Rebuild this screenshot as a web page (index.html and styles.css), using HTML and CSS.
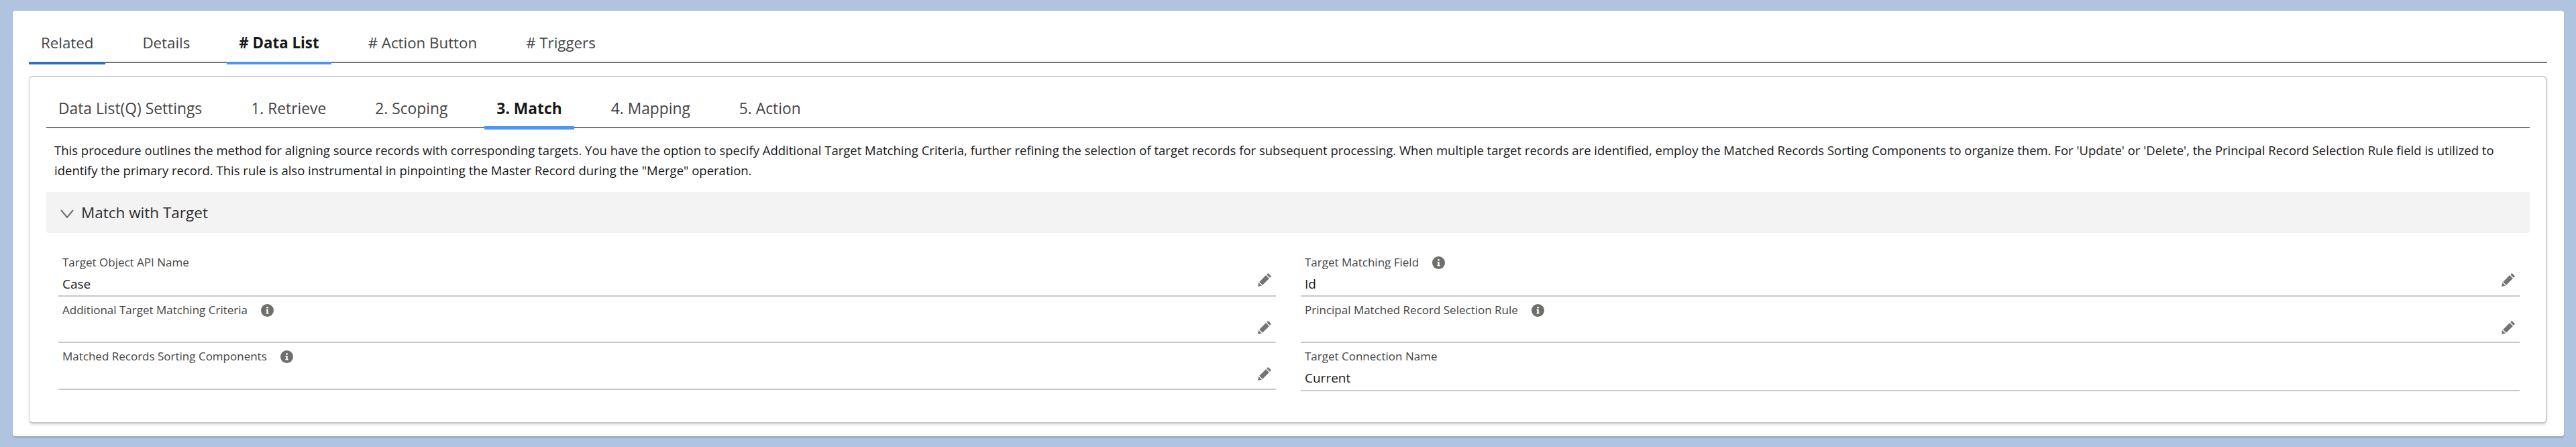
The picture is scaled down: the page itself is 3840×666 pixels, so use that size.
FILE: index.html
```html
<!DOCTYPE html>
<html lang="en">
<head>
<meta charset="utf-8">
<title>Data List - Match</title>
<link rel="stylesheet" href="styles.css">
</head>
<body>
<svg class="defs" width="0" height="0" aria-hidden="true">
  <symbol id="pencil" viewBox="0 0 24 24">
    <g transform="rotate(45 12 12)" fill="currentColor">
      <rect x="8.6" y="-0.4" width="6.8" height="3.2" rx="1"/>
      <rect x="8.6" y="4.2" width="6.8" height="14"/>
      <path d="M8.6 19.6h6.8L12 24.6z"/>
    </g>
  </symbol>
  <symbol id="info" viewBox="0 0 20 20">
    <circle cx="10" cy="10" r="10" fill="currentColor"/>
    <circle cx="10" cy="5.6" r="1.5" fill="#fff"/>
    <path d="M7.9 8.4h3.4v5.4h1v1.5H7.8v-1.5h1V9.9h-.9z" fill="#fff"/>
  </symbol>
</svg>
<main class="page-card">
  <nav class="tabs tabs-main">
    <a class="tab tab-plain">Related</a>
    <a class="tab">Details</a>
    <a class="tab tab-active"># Data List</a>
    <a class="tab"># Action Button</a>
    <a class="tab"># Triggers</a>
  </nav>
  <section class="panel">
    <nav class="tabs tabs-sub">
      <a class="tab">Data List(Q) Settings</a>
      <a class="tab">1. Retrieve</a>
      <a class="tab">2. Scoping</a>
      <a class="tab tab-active">3. Match</a>
      <a class="tab">4. Mapping</a>
      <a class="tab">5. Action</a>
    </nav>
    <p class="intro">This procedure outlines the method for aligning source records with corresponding targets. You have the option to specify Additional Target Matching Criteria, further refining the selection of target records for subsequent processing. When multiple target records are identified, employ the Matched Records Sorting Components to organize them. For 'Update' or 'Delete', the Principal Record Selection Rule field is utilized to identify the primary record. This rule is also instrumental in pinpointing the Master Record during the "Merge" operation.</p>
    <h2 class="section-head">
      <svg class="chevron" viewBox="0 0 20 13"><polyline points="1,1 10,12 19,1"/></svg>
      <span>Match with Target</span>
    </h2>
    <div class="fields">
      <div class="field field-row1">
        <div class="label">Target Object API Name</div>
        <div class="value">Case</div>
        <svg class="pencil"><use href="#pencil"/></svg>
      </div>
      <div class="field field-row1">
        <div class="label">Target Matching Field<svg class="info"><use href="#info"/></svg></div>
        <div class="value">Id</div>
        <svg class="pencil"><use href="#pencil"/></svg>
      </div>
      <div class="field field-row2">
        <div class="label">Additional Target Matching Criteria<svg class="info"><use href="#info"/></svg></div>
        <svg class="pencil"><use href="#pencil"/></svg>
      </div>
      <div class="field field-row2">
        <div class="label">Principal Matched Record Selection Rule<svg class="info"><use href="#info"/></svg></div>
        <svg class="pencil"><use href="#pencil"/></svg>
      </div>
      <div class="field field-row3">
        <div class="label">Matched Records Sorting Components<svg class="info"><use href="#info"/></svg></div>
        <svg class="pencil"><use href="#pencil"/></svg>
      </div>
      <div class="field field-row3b">
        <div class="label">Target Connection Name</div>
        <div class="value">Current</div>
      </div>
    </div>
  </section>
</main>
</body>
</html>
```
FILE: styles.css
```css
* { box-sizing: border-box; }
html, body { margin: 0; height: 666px; overflow: hidden; }
body {
  background: #b0c4df;
  padding: 16px 18px 16px 19px;
  font-family: "Open Sans", "Noto Sans", sans-serif;
  color: #181818;
}
.defs { position: absolute; }
.page-card {
  height: 634px;
  background: #fff;
  border-radius: 4px;
  box-shadow: 0 2px 2px rgba(0, 0, 0, .18);
  padding: 0 25px 0 24px;
}
.tabs { display: flex; border-bottom: 2px solid #747474; }
.tab {
  position: relative;
  display: block;
  padding: 0 18px;
  color: #444;
  white-space: nowrap;
}
.tabs-main { height: 78px; padding-top: 33px; gap: 37px; }
.tabs-main .tab { font-size: 22.3px; line-height: 30px; height: 45px; }
.tabs-sub { height: 76px; margin: 0 24px 0 25px; padding-top: 32px; gap: 37px; }
.tabs-sub .tab { font-size: 22.8px; line-height: 30px; height: 43px; padding: 0 18px; }
.tab-active { color: #181818; font-weight: 700; }
.tab-active::after {
  content: "";
  position: absolute;
  left: 0; right: 0; bottom: -2px;
  height: 4px;
  background: #4a97f3;
}
.tabs-sub .tab-active::after { height: 5px; bottom: -3px; }
.tab-plain::after {
  content: "";
  position: absolute;
  left: 0; right: 0; bottom: -2px;
  height: 3px;
  background: #1b72c9;
}
.panel {
  margin-top: 19px;
  height: 518px;
  border: 1px solid #d0d0d0;
  border-width: 2px 2px 2px 1px;
  border-bottom-color: #c8c8c8;
  border-radius: 6px;
  box-shadow: 0 2px 3px rgba(0, 0, 0, .12);
}
.intro {
  margin: 18px 24px 0 37px;
  font-size: 18.5px;
  line-height: 30px;
  color: #181818;
}
.section-head {
  display: flex;
  align-items: center;
  margin: 17px 24px 0 25px;
  height: 61px;
  padding-left: 21px;
  background: #f3f3f3;
  border-radius: 2px;
  font-size: 22.5px;
  font-weight: 400;
  color: #2e2e2e;
}
.chevron { width: 20px; height: 13px; margin: 3px 11px 0 0; }
.chevron polyline { fill: none; stroke: #706e6b; stroke-width: 2; }
.fields {
  display: grid;
  grid-template-columns: 1815px 1817px;
  column-gap: 37px;
  margin: 24px 0 0 43px;
  align-items: start;
}
.field {
  position: relative;
  border-bottom: 2px solid #c9c9c9;
  padding: 8px 6px 0;
}
.field-row1 { height: 71px; }
.field-row2 { height: 69px; }
.field-row3 { height: 70px; }
.field-row3b { height: 72px; }
.label {
  display: flex;
  align-items: center;
  font-size: 17px;
  line-height: 24px;
  color: #444;
}
.value { margin-top: 6px; font-size: 19px; line-height: 28px; color: #181818; }
.info { width: 19px; height: 19px; margin-left: 20px; color: #706e6b; }
.pencil {
  position: absolute;
  right: 6px;
  top: 35px;
  width: 24px;
  height: 24px;
  color: #747474;
}
```
